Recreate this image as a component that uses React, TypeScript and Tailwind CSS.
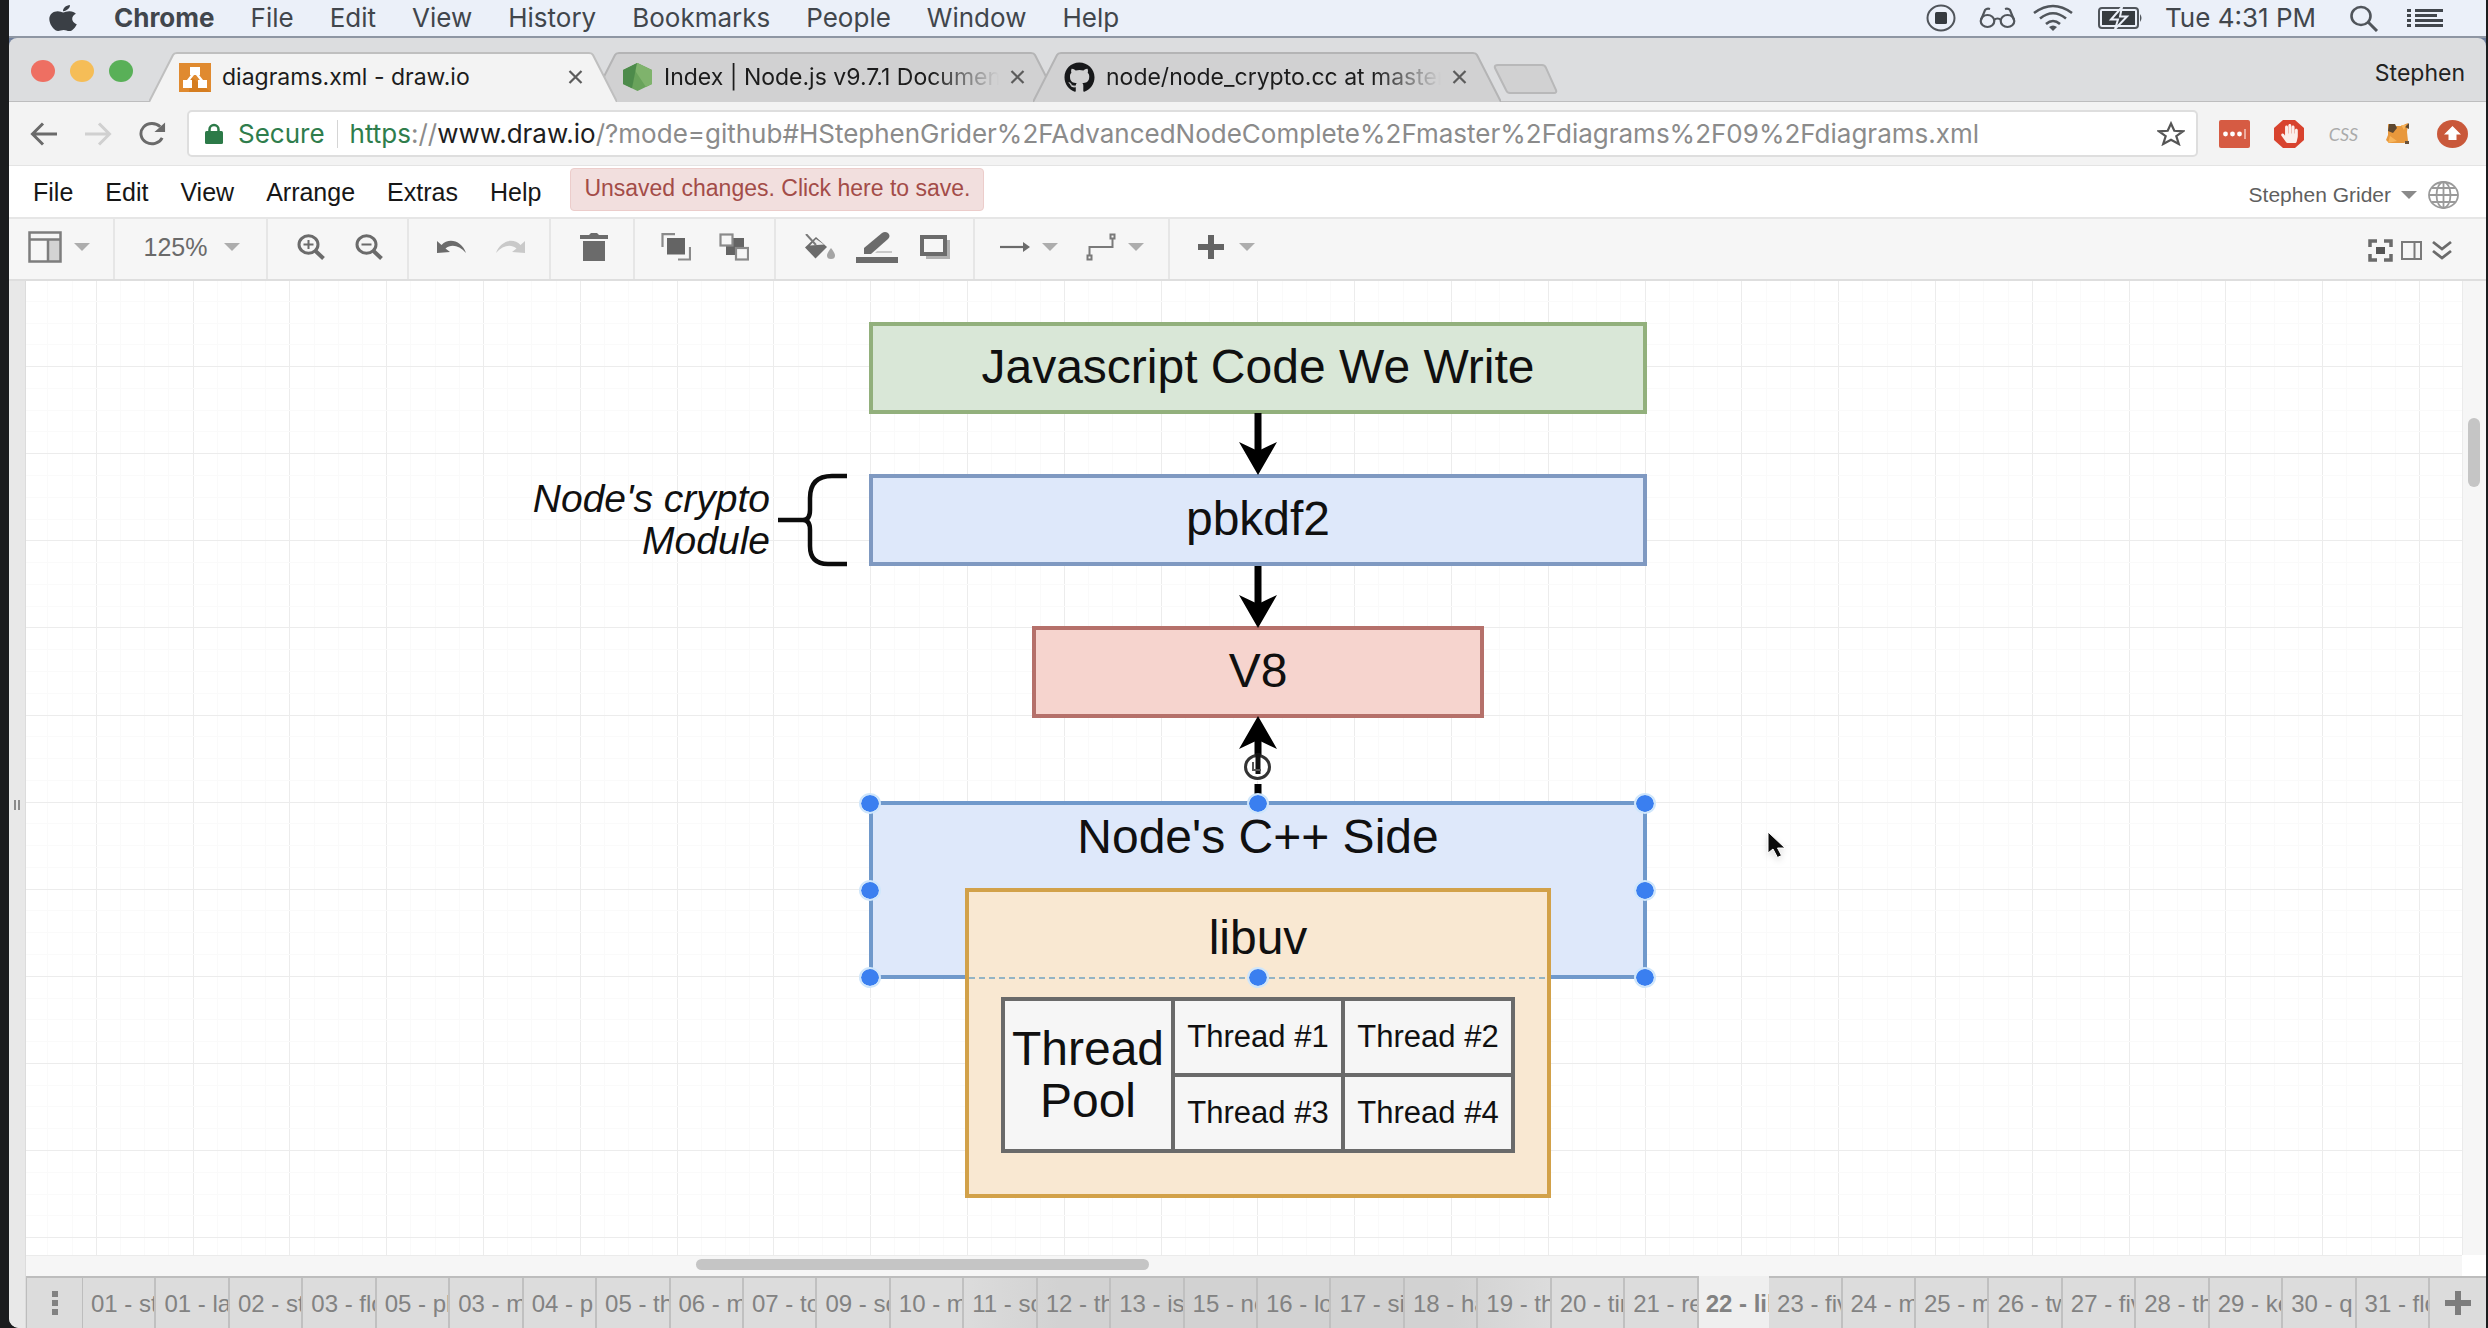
import React from "react";
import { FaApple, FaGithub, FaHandPaper } from "react-icons/fa";

const MAC_MENUS = ["File", "Edit", "View", "History", "Bookmarks", "People", "Window", "Help"];
const APP_MENUS = ["File", "Edit", "View", "Arrange", "Extras", "Help"];
const PAGES = [
  "01 - st", "01 - la", "02 - st", "03 - flo", "05 - pl", "03 - m", "04 - p", "05 - th",
  "06 - m", "07 - to", "09 - so", "10 - m", "11 - so", "12 - th", "13 - is", "15 - no",
  "16 - lo", "17 - si", "18 - ha", "19 - th", "20 - tim", "21 - re", "22 - lib", "23 - fiv",
  "24 - m", "25 - m", "26 - tw", "27 - fiv", "28 - th", "29 - ke", "30 - q", "31 - flo",
];
const ACTIVE_PAGE = 22;

function MenuBar() {
  return (
    <header className="flex h-[38px] shrink-0 items-center border-b-2 border-[#8e96a3] bg-[#ebf0f9] pl-[40px] pr-[43px] font-['Inter',sans-serif] text-[26px] leading-none text-[#41464c]">
      <button aria-label="Apple menu" className="mr-[37px]">
        <FaApple className="h-[30px] w-[28px] text-[#3a3f45]" preserveAspectRatio="none" />
      </button>
      <nav className="flex items-center gap-[36px]">
        <button className="font-bold">Chrome</button>
        {MAC_MENUS.map((m) => (
          <button key={m}>{m}</button>
        ))}
      </nav>
      <div className="ml-auto flex items-center">
        <button aria-label="Recording">
          <svg width="30" height="28" viewBox="0 0 30 28">
            <ellipse cx="15" cy="14" rx="13.5" ry="12.5" fill="none" stroke="#50555b" strokeWidth="2" />
            <rect x="9" y="8" width="12" height="12" rx="1.5" fill="#363b40" />
          </svg>
        </button>
        <button aria-label="Reader" className="ml-[23px]">
          <svg width="37" height="22" viewBox="0 0 37 22" fill="none" stroke="#50555b" strokeWidth="2.2">
            <ellipse cx="8.5" cy="14" rx="6.8" ry="6" />
            <ellipse cx="28.5" cy="14" rx="6.8" ry="6" />
            <path d="M15 13c2-2 5-2 7 0M2 13 6 3q2-2 5-1M35 13 31 3q-2-2-5-1" />
          </svg>
        </button>
        <button aria-label="Wi-Fi" className="ml-[17px]">
          <svg width="40" height="28" viewBox="0 0 40 28" fill="none" stroke="#50555b" strokeWidth="2.6">
            <path d="M1 9Q20-5 39 9M7 14.500Q20 4 33 14.500M13 20Q20 14 27 20" />
            <path d="M20 27l-4-4q4-3 8 0z" fill="#50555b" stroke="none" />
          </svg>
        </button>
        <button aria-label="Battery charging" className="ml-[25px]">
          <svg width="46" height="24" viewBox="0 0 46 24">
            <rect x="1" y="2" width="39" height="20" rx="3" fill="none" stroke="#50555b" strokeWidth="2" />
            <rect x="4" y="5" width="33" height="14" fill="#363b40" />
            <path d="M42 8q3 4 0 8z" fill="#50555b" />
            <path d="M24 1 13 13.500h7L17 23l12-12.500h-7z" fill="#363b40" stroke="#ebf0f9" strokeWidth="2" />
          </svg>
        </button>
        <time className="ml-[21px]">Tue 4:31 PM</time>
        <button aria-label="Search" className="ml-[33px]">
          <svg width="30" height="27" viewBox="0 0 30 27" fill="none" stroke="#50555b" strokeWidth="2.6">
            <ellipse cx="12" cy="11" rx="9.500" ry="9" />
            <path d="M19 17l9 9" strokeWidth="3" />
          </svg>
        </button>
        <button aria-label="Notifications" className="ml-[28px]">
          <svg width="36" height="20" viewBox="0 0 36 20" fill="#41464c">
            <path d="M8 1h28v3H8zM8 6h22v3H8zM8 11h28v3H8zM8 16h28v3H8zM0 1h4v3H0zM0 6h4v3H0zM0 11h4v3H0zM0 16h4v3H0z" />
          </svg>
        </button>
      </div>
    </header>
  );
}

function TabShape({ active }: { active?: boolean }) {
  return (
    <svg className="absolute inset-0 h-full w-full" viewBox="0 0 468 50" preserveAspectRatio="none">
      <path
        d="M0 50 L24 3 Q25 1 28 1 H440 Q443 1 444 3 L468 50"
        className={active ? "fill-[#f3f3f3] stroke-[#bfbfbf]" : "fill-[#d1d1d2] stroke-[#b4b4b5]"}
        strokeWidth="2"
      />
    </svg>
  );
}

function Tab({ active, icon, title, fade }: { active?: boolean; icon: React.ReactNode; title: string; fade?: boolean }) {
  return (
    <div className={active ? "relative z-10 flex h-[50px] w-[468px] items-center" : "relative -ml-[26px] flex h-[50px] w-[468px] items-center"}>
      <TabShape active={active} />
      <button
        role="tab"
        aria-selected={!!active}
        className="relative flex w-[408px] items-center pl-[30px] text-left text-[23px] leading-[28px] text-[#1c1c1c]"
      >
        <span className="mr-[11px] flex w-8 shrink-0 justify-center">{icon}</span>
        <span
          className={
            fade
              ? "overflow-hidden whitespace-nowrap [mask-image:linear-gradient(to_right,black_80%,transparent)]"
              : "overflow-hidden whitespace-nowrap"
          }
        >
          {title}
        </span>
      </button>
      <button aria-label={"Close " + title} className="relative ml-[11px]">
        <svg width="15" height="14" viewBox="0 0 15 14" stroke="#5c5c5c" strokeWidth="2.200">
          <path d="M1.500 1l12 12M13.500 1l-12 12" />
        </svg>
      </button>
    </div>
  );
}

function TabStrip() {
  return (
    <div className="shrink-0 bg-[#6f7f9d]">
      <div className="flex h-[64px] items-end rounded-t-[8px] border-b border-[#bdbdbe] bg-[#dcdddf] pl-[22px] pr-[21px] font-['Inter',sans-serif]">
        <div className="mr-[16px] flex gap-[15px] self-center pt-[2px]">
          <button aria-label="Close window" className="h-[22px] w-6 rounded-[50%] bg-[#ee6f62]" />
          <button aria-label="Minimize window" className="h-[22px] w-6 rounded-[50%] bg-[#f5bd57]" />
          <button aria-label="Zoom window" className="h-[22px] w-6 rounded-[50%] bg-[#59b058]" />
        </div>
        <div role="tablist" className="-mb-px flex items-end">
          <Tab
            active
            title="diagrams.xml - draw.io"
            icon={
              <svg width="32" height="29" viewBox="0 0 32 29">
                <rect width="32" height="29" fill="#e08a2f" />
                <path d="M12 14 32 29H10z" fill="#c96f12" opacity=".5" />
                <path d="M15 10 8 19M17 10l7 9" stroke="#fff" strokeWidth="2.500" />
                <path d="M11 4h10v8H11zM4 17h9v8H4zM19 17h9v8h-9z" fill="#fff" />
              </svg>
            }
          />
          <Tab
            fade
            title="Index | Node.js v9.7.1 Documen"
            icon={
              <svg width="29" height="28" viewBox="0 0 29 28">
                <path d="M14.500 0 29 7v14l-14.500 7L0 21V7z" fill="#69a35b" />
                <path d="M14.500 0 29 7v14l-6 3L9 3z" fill="#7fb36c" />
                <path d="M0 7v14l9 4.300L14 0z" fill="#4d8b4b" />
              </svg>
            }
          />
          <Tab
            fade
            title="node/node_crypto.cc at master"
            icon={<FaGithub className="h-[31px] w-[31px] text-[#17181a]" />}
          />
        </div>
        <button aria-label="New tab" className="-ml-[8px] mb-[7px]">
          <svg width="66" height="30" viewBox="0 0 66 30">
            <path d="M5 1h44q3 0 4 3l10 22q1 3-2 3H17q-3 0-4-3L2 4Q1 1 5 1z" fill="#d1d1d2" stroke="#b8b8b9" strokeWidth="2" />
          </svg>
        </button>
        <button className="mb-[16px] ml-auto text-[23px] leading-[24px] text-[#222]">Stephen</button>
      </div>
    </div>
  );
}

function AddressBar() {
  return (
    <div className="flex h-[64px] shrink-0 items-center border-b border-[#e4e4e4] bg-[#f3f3f3] pl-[21px] pr-[18px] font-['Inter',sans-serif]">
      <button aria-label="Back">
        <svg width="28" height="24" viewBox="0 0 28 24" fill="none" stroke="#6a6a6a" strokeWidth="3">
          <path d="M27 12H3M13 1.500 2.500 12 13 22.500" />
        </svg>
      </button>
      <button aria-label="Forward" disabled className="ml-[26px]">
        <svg width="28" height="24" viewBox="0 0 28 24" fill="none" stroke="#d0d0d0" strokeWidth="3">
          <path d="M1 12h24M15 1.500 25.500 12 15 22.500" />
        </svg>
      </button>
      <button aria-label="Reload" className="ml-[26px]">
        <svg width="29" height="25" viewBox="0 0 30 25" fill="none" stroke="#6a6a6a" strokeWidth="3">
          <path d="M25 17A11.500 10.500 0 1 1 23 5.500" />
          <path d="M28 1v10H17z" fill="#6a6a6a" stroke="none" />
        </svg>
      </button>
      <div className="ml-[20px] flex h-[47px] min-w-0 flex-1 items-center rounded-[5px] border-2 border-[#dedede] bg-white pl-[14px] pr-[11px] text-[26px] leading-[32px]">
        <svg width="18" height="21" viewBox="0 0 18 21" className="ml-[2px] shrink-0">
          <rect y="8" width="18" height="13" rx="1.500" fill="#2c7a48" />
          <path d="M4.500 9V6.500a4.500 4.500 0 0 1 9 0V9" fill="none" stroke="#2c7a48" strokeWidth="2.500" />
        </svg>
        <span className="ml-[15px] text-[#2f7d4c]">Secure</span>
        <span className="mx-3 h-7 w-px bg-[#d5d5d5]" />
        <div
          role="textbox"
          aria-label="Address"
          contentEditable
          suppressContentEditableWarning
          className="min-w-0 flex-1 overflow-hidden whitespace-nowrap text-[#8b8b8b]"
        >
          <span className="text-[#2f7d4c]">https</span>://<span className="text-[#1d1d1d]">www.draw.io</span>
          /?mode=github#HStephenGrider%2FAdvancedNodeComplete%2Fmaster%2Fdiagrams%2F09%2Fdiagrams.xml
        </div>
        <button aria-label="Bookmark this page" className="ml-4 shrink-0">
          <svg width="28" height="25" viewBox="0 0 28 25" fill="none" stroke="#555" strokeWidth="2.200">
            <path d="M14 2.500 17.300 9.800 26 10.300 19.300 15.200 21.800 23 14 18.700 6.200 23 8.700 15.200 2 10.300 10.700 9.800z" />
          </svg>
        </button>
      </div>
      <div className="ml-[21px] flex shrink-0 items-center">
        <button aria-label="Password manager">
          <svg width="31" height="28" viewBox="0 0 31 28">
            <rect width="31" height="28" rx="2" fill="#d65b43" />
            <circle cx="6.500" cy="14" r="2.400" fill="#fff" />
            <circle cx="13.500" cy="14" r="2.400" fill="#fff" />
            <circle cx="20.500" cy="14" r="2.400" fill="#fff" />
            <path d="M26 9v10" stroke="#f4c6bb" strokeWidth="1.500" />
          </svg>
        </button>
        <button aria-label="Ad blocker" className="relative ml-[24px]">
          <svg width="30" height="28" viewBox="0 0 30 28">
            <path d="M9 0h12l9 8v12l-9 8H9l-9-8V8z" fill="#d8432e" />
          </svg>
          <FaHandPaper className="absolute left-[6px] top-[4px] size-[19px] text-[#fbeeea]" />
        </button>
        <button aria-label="CSS tools" className="ml-[24px] w-[31px] text-center font-['Lato',sans-serif] text-[18px] italic leading-none text-[#ababab]">
          CSS
        </button>
        <button aria-label="Wallet" className="ml-[27px]">
          <svg width="24" height="21" viewBox="0 0 24 21">
            <path d="M2 1 9 3h6l7-3-1 9 1 9-4 2H3l-3-3 2-5z" fill="#e8983c" />
            <path d="M3 1h6l2 4-4 5-5-2zM19 4l4-4v6z" fill="#5d4730" />
            <path d="M15 2h5l-2 5zM4 13l7 5-9 2z" fill="#f7b45b" />
            <path d="M19 18h4v3h-4z" fill="#6b5238" />
          </svg>
        </button>
        <button aria-label="Updates" className="ml-[27px]">
          <svg width="31" height="28" viewBox="0 0 31 28">
            <ellipse cx="15.500" cy="14" rx="15.500" ry="14" fill="#c9583a" />
            <path d="M15.500 6 24 14.500h-4.500V20h-8v-5.500H7z" fill="#fff" />
          </svg>
        </button>
      </div>
    </div>
  );
}

function Caret({ dark }: { dark?: boolean }) {
  return (
    <svg width="16" height="8" viewBox="0 0 16 8" className={dark ? "fill-[#8a8a8a]" : "fill-[#adadad]"}>
      <path d="M0 0h16L8 8z" />
    </svg>
  );
}

function AppMenu() {
  return (
    <div className="flex h-[53px] shrink-0 items-start border-b-2 border-[#e6e6e6] bg-white pl-[24px] pr-[27px] pt-[2px] font-['Liberation_Sans',sans-serif]">
      <nav className="flex gap-[32px] pt-[8px] text-[25px] leading-[32px] text-[#161616]">
        {APP_MENUS.map((m) => (
          <button key={m}>{m}</button>
        ))}
      </nav>
      <button className="ml-[29px] rounded-[4px] border border-[#eccdcb] bg-[#f2dfde] px-[13px] pb-[2px] text-[23px] leading-[39px] text-[#a34c48]">
        Unsaved changes. Click here to save.
      </button>
      <div className="ml-auto flex items-center pt-[13px]">
        <button className="flex items-center gap-[10px] text-[21px] leading-[28px] text-[#5f5f5f]">
          Stephen Grider
          <Caret dark />
        </button>
        <button aria-label="Language" className="ml-[11px]">
          <svg width="31" height="28" viewBox="0 0 31 28" fill="none" stroke="#9a9a9a" strokeWidth="1.800">
            <ellipse cx="15.500" cy="14" rx="14.500" ry="13" />
            <ellipse cx="15.500" cy="14" rx="7" ry="13" />
            <path d="M15.500 1v26M1 14h29M4 7h23M4 21h23" />
          </svg>
        </button>
      </div>
    </div>
  );
}

function ToolIcon({ label, children, w = 58 }: { label: string; children: React.ReactNode; w?: 58 | 0 }) {
  return (
    <button aria-label={label} className={w ? "flex h-10 w-[58px] items-center justify-center" : "flex h-10 items-center gap-[12px]"}>
      {children}
    </button>
  );
}

const GROUP = "flex items-center justify-center border-r-2 border-[#e6e6e6]";

function Toolbar() {
  return (
    <div className="flex h-[62px] shrink-0 border-b-2 border-[#dedede] bg-[#f6f6f6] pr-[34px] font-['Liberation_Sans',sans-serif]">
      <div className={GROUP + " w-[106px] pb-[4px] pr-[4px]"}>
        <ToolIcon label="View" w={0}>
          <svg width="34" height="32" viewBox="0 0 34 32" fill="none" stroke="#7d7d7d" strokeWidth="2.500">
            <rect x="20" y="9" width="12" height="21" fill="#d3d3d3" stroke="none" />
            <path d="M1.500 1.500h31v29h-31zM1.500 8.500h31M20 8.500v22" />
          </svg>
          <Caret />
        </ToolIcon>
      </div>
      <div className={GROUP + " w-[153px] pb-[4px] pl-[3px]"}>
        <button className="flex items-center gap-[17px] text-[25px] leading-8 text-[#6a6a6a]">
          125%
          <Caret />
        </button>
      </div>
      <div className={GROUP + " w-[141px] pb-[4px] pl-[4px]"}>
        <ToolIcon label="Zoom in">
          <svg width="28" height="26" viewBox="0 0 28 26" fill="none" stroke="#6b6b6b">
            <ellipse cx="11.500" cy="10.500" rx="9.500" ry="8.800" strokeWidth="3" />
            <path d="M18.500 17l8 7.500" strokeWidth="4" />
            <path d="M6.500 10.500h10M11.500 6v9" strokeWidth="2" />
          </svg>
        </ToolIcon>
        <ToolIcon label="Zoom out">
          <svg width="28" height="26" viewBox="0 0 28 26" fill="none" stroke="#6b6b6b">
            <ellipse cx="11.500" cy="10.500" rx="9.500" ry="8.800" strokeWidth="3" />
            <path d="M18.500 17l8 7.500" strokeWidth="4" />
            <path d="M6.500 10.500h10" strokeWidth="2" />
          </svg>
        </ToolIcon>
      </div>
      <div className={GROUP + " w-[142px] pb-[4px] pl-[4px]"}>
        <ToolIcon label="Undo">
          <svg width="30" height="15" viewBox="0 0 30 15" fill="#6b6b6b">
            <path d="M0 1v12l13-1-4.500-3.500C14 4 22 5 29 13 25 1 12-3 4.500 5z" />
          </svg>
        </ToolIcon>
        <ToolIcon label="Redo">
          <svg width="30" height="15" viewBox="0 0 30 15" fill="#c9c9c9">
            <path d="M30 1v12l-13-1 4.500-3.500C16 4 8 5 1 13 5 1 18-3 25.500 5z" />
          </svg>
        </ToolIcon>
      </div>
      <div className={GROUP + " w-[84px] pb-[4px] pl-[4px]"}>
        <ToolIcon label="Delete">
          <svg width="28" height="28" viewBox="0 0 28 28" fill="#6b6b6b">
            <path d="M0 2h9l2-2h6l2 2h9v4H0zM3 8h22v20H3z" />
          </svg>
        </ToolIcon>
      </div>
      <div className={GROUP + " w-[141px] pb-[4px]"}>
        <ToolIcon label="To front">
          <svg width="30" height="28" viewBox="0 0 30 28">
            <path d="M14 1.200H1.500V14M17 26.500h12V14" fill="none" stroke="#8a8a8a" strokeWidth="2.200" />
            <rect x="6" y="5" width="18" height="16.500" fill="#646464" />
          </svg>
        </ToolIcon>
        <ToolIcon label="To back">
          <svg width="30" height="28" viewBox="0 0 30 28">
            <rect x="7" y="5" width="18" height="17" fill="#646464" />
            <rect x="1.500" y="1.500" width="12" height="11" fill="#f6f6f6" stroke="#8a8a8a" strokeWidth="2.200" />
            <rect x="17" y="15" width="12" height="11.500" fill="#f6f6f6" stroke="#8a8a8a" strokeWidth="2.200" />
          </svg>
        </ToolIcon>
      </div>
      <div className={GROUP + " w-[199px] pb-[4px] pl-[4px]"}>
        <ToolIcon label="Fill color">
          <svg width="32" height="26" viewBox="0 0 32 26">
            <path d="M13 3 2 13.500 12.500 24.500 24 13z" fill="#6b6b6b" />
            <path d="M13 5 7 11.500l14-1z" fill="#f0f0f0" />
            <path d="M3 0l10 11" stroke="#7a7a7a" strokeWidth="2" />
            <path d="M28 14q4 5 4 7.500a4 3.500 0 0 1-8 0Q24 19 28 14z" fill="#a5a5a5" />
          </svg>
        </ToolIcon>
        <ToolIcon label="Line color">
          <svg width="42" height="32" viewBox="0 0 42 32" fill="#6b6b6b">
            <path d="M8 17 26 2q3-2 6 0 3 3 0 6L15 23H8z" />
            <path d="M21 20h15v2H19z" fill="#c9c9c9" />
            <path d="M0 26h42v6H0z" />
          </svg>
        </ToolIcon>
        <ToolIcon label="Shadow">
          <svg width="30" height="24" viewBox="0 0 30 24">
            <path d="M6 5h24v19H6z" fill="#b0b0b0" />
            <rect x="2" y="2" width="23" height="17" fill="#f6f6f6" stroke="#6b6b6b" strokeWidth="4" />
          </svg>
        </ToolIcon>
      </div>
      <div className={GROUP + " w-[195px] gap-[28px] pb-[4px]"}>
        <ToolIcon label="Connection" w={0}>
          <svg width="30" height="12" viewBox="0 0 30 12">
            <path d="M0 6h24" stroke="#6b6b6b" strokeWidth="2.200" />
            <path d="M23 1l7 5-7 5z" fill="#6b6b6b" />
          </svg>
          <Caret />
        </ToolIcon>
        <ToolIcon label="Waypoints" w={0}>
          <svg width="30" height="28" viewBox="0 0 30 28" fill="none" stroke="#7a7a7a" strokeWidth="2">
            <path d="M3.500 22v-8h23V6" />
            <path d="M1.500 22.500h4v4h-4zM24.500 1.500h4v4h-4z" />
          </svg>
          <Caret />
        </ToolIcon>
      </div>
      <div className="flex items-center pb-[4px] pl-[28px]">
        <button aria-label="Insert" className="flex h-10 items-center gap-[15px]">
          <svg width="26" height="24" viewBox="0 0 26 24" fill="#646464">
            <path d="M10 0h6v9h10v6H16v9h-6v-9H0V9h10z" />
          </svg>
          <Caret />
        </button>
      </div>
      <div className="ml-auto flex items-center gap-[8px] pt-[2px]">
        <button aria-label="Fullscreen">
          <svg width="25" height="23" viewBox="0 0 25 23">
            <path d="M2 8V2h7M16 2h7v6M23 15v6h-7M9 21H2v-6" fill="none" stroke="#6b6b6b" strokeWidth="3.500" />
            <rect x="8" y="8" width="9" height="7" fill="#555" />
          </svg>
        </button>
        <button aria-label="Format panel">
          <svg width="21" height="19" viewBox="0 0 21 19" fill="none" stroke="#7a7a7a" strokeWidth="2">
            <path d="M1 1h19v17H1zM13.500 1v17" />
          </svg>
        </button>
        <button aria-label="Collapse" className="ml-[2px]">
          <svg width="20" height="20" viewBox="0 0 20 20" fill="none" stroke="#6b6b6b" strokeWidth="2.800">
            <path d="M1 2l9 7 9-7M1 11l9 7 9-7" />
          </svg>
        </button>
      </div>
    </div>
  );
}

function Grid() {
  const columns = Array.from({ length: 160 }, (_, i) => i);
  const rows = Array.from({ length: 80 }, (_, i) => i);
  return (
    <svg className="absolute inset-0 h-full w-full" shapeRendering="crispEdges" aria-hidden="true">
      {columns.map((i) => (
        <rect key={"c" + i} x={Math.round(-27 + i * 24.2)} y="0" width="1" height="100%" fill={i % 4 === 0 ? "#ececec" : "#fafafa"} />
      ))}
      {rows.map((i) => (
        <rect key={"r" + i} x="0" y={Math.round(-2 + i * 21.775)} width="100%" height="1" fill={i % 4 === 0 ? "#ececec" : "#fafafa"} />
      ))}
    </svg>
  );
}

function Handle({ at }: { at: string }) {
  return <span className={"absolute h-[17px] w-[18px] rounded-[50%] bg-[#3a7ff0] outline-2 outline-[#cfe6fb] " + at} />;
}

const NODE = "absolute flex items-center justify-center border-4 pb-[2px] text-[48px] leading-[52px] text-[#101010]";

function Canvas() {
  return (
    <main className="relative min-w-0 flex-1 overflow-hidden bg-white font-['Liberation_Sans',sans-serif]">
      <Grid />

      <div className={NODE + " left-[843px] top-[41px] h-[92px] w-[778px] border-[#92b07c] bg-[#d9e7d7]"}>Javascript Code We Write</div>
      <div className={NODE + " left-[843px] top-[193px] h-[92px] w-[778px] border-[#7f99c1] bg-[#dee8fa]"}>pbkdf2</div>
      <div className={NODE + " left-[1006px] top-[345px] h-[92px] w-[452px] border-[#b5706a] bg-[#f6d4ce]"}>V8</div>

      <p className="absolute left-[444px] top-[197px] w-[300px] text-right text-[39px] italic leading-[42px] text-[#101010]">
        Node's crypto
        <br />
        Module
      </p>
      <svg className="absolute left-[752px] top-[192px]" width="70" height="94" viewBox="0 0 70 94" fill="none" stroke="#0c0c0c" strokeWidth="4.500">
        <path d="M69 3H54Q32 3 32 25V37Q32 47 25 47H0H25Q32 47 32 57V73Q32 91 50 91H69" />
      </svg>

      <svg className="absolute left-[1212px] top-[132px]" width="40" height="62" viewBox="0 0 40 62">
        <path d="M20 0v42" stroke="#000" strokeWidth="7" />
        <path d="M20 62 1 29l19 9 19-9z" />
      </svg>
      <svg className="absolute left-[1212px] top-[285px]" width="40" height="62" viewBox="0 0 40 62">
        <path d="M20 0v42" stroke="#000" strokeWidth="7" />
        <path d="M20 62 1 29l19 9 19-9z" />
      </svg>
      <svg className="absolute left-[1212px] top-[435px]" width="40" height="88" viewBox="0 0 40 88">
        <path d="M20 24v16M20 68v10" stroke="#000" strokeWidth="7" />
        <path d="M20 0 1 33l19-9 19 9z" />
        <ellipse cx="19.500" cy="51" rx="12" ry="11.500" fill="#fff" fillOpacity=".8" stroke="#333" strokeWidth="3" />
        <path d="M20 37v21" stroke="#111" strokeWidth="5" />
        <path d="M15 46v8h8" fill="none" stroke="#555" strokeWidth="2" />
      </svg>

      <div className="absolute left-[843px] top-[520px] h-[178px] w-[778px] border-4 border-[#7099cb] bg-[#dee8fa] pt-[6px] text-center text-[48px] leading-[52px] text-[#101010]">
        Node's C++ Side
      </div>
      <div className="absolute left-[939px] top-[607px] flex h-[310px] w-[586px] flex-col items-center border-4 border-[#d2a149] bg-[#f9e8d2] pt-[20px] text-[#101010]">
        <span className="text-[48px] leading-[52px]">libuv</span>
        <table className="mt-[33px] h-[156px] w-[514px] table-fixed border-collapse bg-[#f6f6f6] text-center text-[31px] leading-[36px]">
          <tbody>
            <tr>
              <th rowSpan={2} scope="rowgroup" className="border-4 border-[#6a6a6a] text-[48px] font-normal leading-[52px]">
                Thread Pool
              </th>
              <td className="border-4 border-[#6a6a6a]">Thread #1</td>
              <td className="border-4 border-[#6a6a6a]">Thread #2</td>
            </tr>
            <tr>
              <td className="border-4 border-[#6a6a6a]">Thread #3</td>
              <td className="border-4 border-[#6a6a6a]">Thread #4</td>
            </tr>
          </tbody>
        </table>
      </div>

      <svg className="absolute left-[943px] top-[696px]" width="578" height="2" viewBox="0 0 578 2">
        <path d="M0 1h578" stroke="#94b4c4" strokeWidth="2" strokeDasharray="6 4" />
      </svg>
      <Handle at="left-[835px] top-[514px]" />
      <Handle at="left-[1223px] top-[514px]" />
      <Handle at="left-[1610px] top-[514px]" />
      <Handle at="left-[835px] top-[601px]" />
      <Handle at="left-[1610px] top-[601px]" />
      <Handle at="left-[835px] top-[688px]" />
      <Handle at="left-[1223px] top-[688px]" />
      <Handle at="left-[1610px] top-[688px]" />

      <svg className="absolute left-[1741px] top-[550px] drop-shadow-md" width="20" height="28" viewBox="0 0 20 28">
        <path d="M1 1v21l5-4 4.500 8.500 4-2L10.500 17H18z" fill="#0b0b0b" stroke="#fff" strokeWidth="1" />
      </svg>
    </main>
  );
}

function PageTabs() {
  return (
    <footer className="flex h-[52px] shrink-0 border-t-2 border-[#bdbdbd] bg-[#dcdcdc] bg-[linear-gradient(to_right,transparent_38%,#d2d2d2_42%,#d2d2d2_58%,transparent_62%)] font-['Liberation_Sans',sans-serif] text-[24px] leading-[52px] text-[#828282]">
      <button aria-label="Pages" className="flex w-[57px] shrink-0 items-center justify-center border-x border-[#bdbdbd]">
        <svg width="8" height="24" viewBox="0 0 8 24" fill="#828282">
          <path d="M1 0h6v6H1zM1 9h6v6H1zM1 18h6v6H1z" />
        </svg>
      </button>
      <div role="tablist" className="flex min-w-0 flex-1">
        {PAGES.map((p, i) => (
          <button
            key={i}
            role="tab"
            aria-selected={i === ACTIVE_PAGE}
            className={
              i === ACTIVE_PAGE
                ? "-mt-[2px] min-w-0 flex-1 overflow-hidden whitespace-nowrap bg-[#efefef] pl-[7px] pt-[2px] text-left font-bold"
                : "min-w-0 flex-1 overflow-hidden whitespace-nowrap border-r-2 border-[#c0c0c0] pl-[8px] text-left"
            }
          >
            {p}
          </button>
        ))}
      </div>
      <button aria-label="Insert page" className="flex w-[56px] shrink-0 items-center justify-center">
        <svg width="26" height="24" viewBox="0 0 26 24" fill="#7d7d7d">
          <path d="M10 0h6v9h10v6H16v9h-6v-9H0V9h10z" />
        </svg>
      </button>
    </footer>
  );
}

export default function App() {
  return (
    <div className="h-screen overflow-hidden bg-[#1b1c1e] pl-[9px] pr-[2px]">
      <div className="flex h-full flex-col overflow-hidden rounded-bl-[10px]">
        <MenuBar />
        <TabStrip />
        <AddressBar />
        <AppMenu />
        <Toolbar />
        <div className="flex min-h-0 flex-1 bg-[#f6f6f6]">
          <div role="separator" aria-orientation="vertical" className="flex w-[17px] shrink-0 items-center justify-center gap-[2px] border-r border-[#dcdcdc] bg-[#e8e8e8]">
            <span className="h-[10px] w-[2px] bg-[#8a8a8a]" />
            <span className="h-[10px] w-[2px] bg-[#8a8a8a]" />
          </div>
          <div className="flex min-w-0 flex-1 flex-col">
            <div className="flex min-h-0 flex-1">
              <Canvas />
              <div className="w-[24px] shrink-0 border-l border-[#ebebeb] bg-[#f6f6f6] pl-[5px] pt-[137px]">
                <div className="h-[69px] w-[12px] rounded-full bg-[#c5c5c5]" />
              </div>
            </div>
            <div className="flex h-[21px] shrink-0 bg-white">
              <div className="flex-1 border-t border-[#ebebeb] bg-[#f6f6f6] pl-[670px] pt-[3px]">
                <div className="h-[11px] w-[453px] rounded-full bg-[#c5c5c5]" />
              </div>
              <div className="w-[24px] shrink-0" />
            </div>
            <PageTabs />
          </div>
        </div>
      </div>
    </div>
  );
}
